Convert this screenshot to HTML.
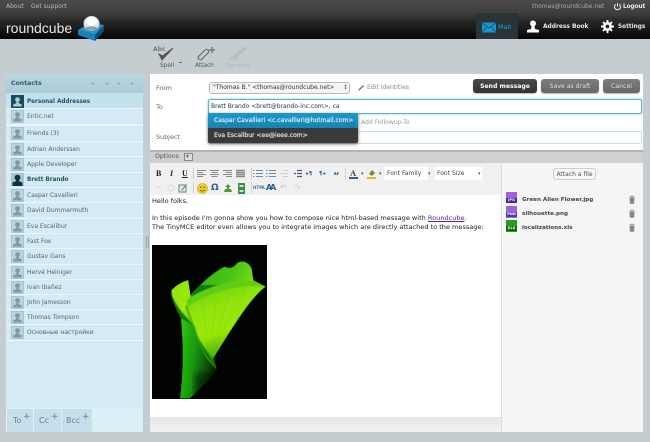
<!DOCTYPE html>
<html><head><meta charset="utf-8">
<style>
html,body{margin:0;padding:0}
body{width:650px;height:442px;overflow:hidden;position:relative;background:#c6cdd0;font-family:"DejaVu Sans","Liberation Sans","Noto Sans CJK SC",sans-serif;font-size:6.2px;color:#333}
div,span,svg{position:absolute;white-space:nowrap;box-sizing:border-box}
.t{line-height:10px;height:10px}
.c{left:27px;color:#4a6a77;font-size:6px;line-height:10px}
.cb{color:#2d5263;font-weight:bold;font-size:5.7px}
.l{position:absolute;left:6px;width:137px;height:1px;background:#e9f5fa}
.ic{left:11px;width:13px;height:13px}
.btn{height:14px;border-radius:3px;color:#ddd;text-align:center;line-height:15px;font-size:6.2px;background:linear-gradient(#7d7d7d,#686868);box-shadow:0 1px 1px #bbb}
.lab{color:#666;font-size:6.4px;left:156px;line-height:10px}
.fn{left:522px;font-size:5.6px;font-weight:bold;color:#444;line-height:10px}
.tb{color:#555;font-size:7px;line-height:10px}
.sep{width:1px;height:11px;background:#cfcfcf}
.ft{left:506px;width:11px;height:5px;font-size:3.6px;line-height:5px;color:#fff;font-weight:bold;text-align:center}
</style></head><body>
<svg width="0" height="0" style="left:0;top:0"><defs>
<symbol id="p" viewBox="0 0 13 13"><rect width="13" height="13" fill="#a9c4cf"/><rect x="1" y="1" width="11" height="11" fill="#bcd3dc"/><circle cx="6.500" cy="4.600" r="2.400" fill="#7d99a5"/><path d="M5.500 6.500h2l.3 1.600 3 1.400v2h-8.600v-2l3-1.400z" fill="#7d99a5"/></symbol>
<symbol id="d" viewBox="0 0 13 13"><rect width="13" height="13" fill="#1b4a5e"/><circle cx="6.500" cy="4.600" r="2.400" fill="#a9cad6"/><path d="M5.500 6.500h2l.3 1.600 3 1.400v2h-8.600v-2l3-1.400z" fill="#a9cad6"/></symbol>
<symbol id="b" viewBox="0 0 13 13"><rect width="13" height="13" fill="#a9c4cf"/><circle cx="6.500" cy="4.600" r="2.900" fill="#0d3344"/><path d="M5.200 6.500h2.600l.3 1.600 3.400 1.400v3.500H1.500V9.500l3.400-1.400z" fill="#0d3344"/></symbol>
<symbol id="tr" viewBox="0 0 8 9"><path d="M1 2h6M3 2V1h2v1M1.800 3h4.400l-.4 5.500H2.200z" fill="#888" stroke="#888" stroke-width=".6"/></symbol>
<filter id="b2"><feGaussianBlur stdDeviation="1.500"/></filter>
<filter id="b3"><feGaussianBlur stdDeviation="2.200"/></filter>
<filter id="b4"><feGaussianBlur stdDeviation="12"/></filter>
<linearGradient id="fr" x1=".2" y1="0" x2=".55" y2="1"><stop offset="0" stop-color="#66cc12"/><stop offset=".35" stop-color="#93e40a"/><stop offset=".65" stop-color="#9ae806"/><stop offset="1" stop-color="#2a9a0a"/></linearGradient>
<linearGradient id="lw" x1="0" y1="0" x2="1" y2=".3"><stop offset="0" stop-color="#35d016"/><stop offset=".5" stop-color="#17980c"/><stop offset="1" stop-color="#032a03"/></linearGradient>
<linearGradient id="bk" x1="0" y1="0" x2="1" y2=".3"><stop offset="0" stop-color="#2fa812"/><stop offset=".7" stop-color="#4cc414"/><stop offset="1" stop-color="#72da18"/></linearGradient>
<linearGradient id="lb" x1="0" y1="0" x2="1" y2="1"><stop offset="0" stop-color="#8ede14"/><stop offset=".6" stop-color="#a0e80a"/><stop offset="1" stop-color="#46ae0c"/></linearGradient>
</defs></svg>

<!-- header -->
<div style="left:0;top:0;width:650px;height:39px;background:linear-gradient(#4c4c4c 0,#3d3d3d 14px,#2a2a2a 20px,#060606 39px)"></div>
<div class="t" style="left:6px;top:2px;color:#bbb;font-size:6px">About</div>
<div class="t" style="left:31px;top:2px;color:#bbb;font-size:6px">Get support</div>
<div class="t" style="left:532px;top:2px;color:#aaa;font-size:6px">thomas@roundcube.net</div>
<div class="t" style="left:623px;top:2px;color:#eee;font-size:5.700px;font-weight:bold">Logout</div>
<svg style="left:613px;top:2px" width="9" height="9" viewBox="0 0 9 9"><path d="M2.800 2.300a3 3 0 1 0 3.400 0M4.500 1v3.500" fill="none" stroke="#eee" stroke-width="1"/></svg>
<div style="left:6px;top:18px;font-family:'Liberation Sans',sans-serif;font-size:14px;line-height:20px;color:#e6e6e6">roundcube</div>
<svg style="left:76px;top:14px" width="30" height="28" viewBox="0 0 30 28">
<path d="M2 16L14 9L28 11L19 21Z" fill="#2a90cc"/>
<path d="M2 16L19 21V27L2 21Z" fill="#1a80bd"/>
<path d="M19 21L28 11V17L19 27Z" fill="#0e4d7c"/>
<ellipse cx="15.500" cy="9.500" rx="8" ry="7.500" fill="#dfe2e2"/><ellipse cx="15.500" cy="7.500" rx="5.500" ry="4.500" fill="#fff"/>
<ellipse cx="15.500" cy="14.500" rx="6.500" ry="2" fill="#8e9ea6"/>
</svg>
<!-- tabs -->
<div style="left:476px;top:13px;width:42px;height:26px;background:#2a3438"></div>
<svg style="left:482px;top:22px" width="14" height="11" viewBox="0 0 14 11"><rect width="14" height="10" y=".5" rx="1" fill="#1b95cf"/><path d="M0 1l7 5 7-5M0 10l5-5M14 10l-5-5" fill="none" stroke="#0b4f70" stroke-width=".8"/></svg>
<div class="t" style="left:498px;top:22px;color:#1ea3dc;font-size:6.400px;line-height:11px">Mail</div>
<svg style="left:526px;top:20px" width="14" height="13" viewBox="0 0 14 13"><circle cx="7" cy="3.500" r="3" fill="#fff"/><path d="M5.500 6h3l.5 3 4 1v2.500H1V10l4-1z" fill="#fff"/></svg>
<div class="t" style="left:543px;top:22px;color:#e8e8e8;font-size:5.900px;font-weight:bold;line-height:11px">Address Book</div>
<svg style="left:601px;top:20px" width="13" height="13" viewBox="0 0 13 13"><circle cx="6.500" cy="6.500" r="3.200" fill="none" stroke="#fff" stroke-width="2.600"/><path d="M6.500 0v13M0 6.500h13M2 2l9 9M11 2l-9 9" stroke="#fff" stroke-width="1.900"/><circle cx="6.500" cy="6.500" r="1.900" fill="#222"/></svg>
<div class="t" style="left:618px;top:22px;color:#e8e8e8;font-size:5.800px;font-weight:bold;line-height:11px">Settings</div>

<!-- top toolbar -->
<div class="t" style="left:153px;top:45px;color:#777;font-size:6px;font-weight:bold">Abc</div>
<svg style="left:156px;top:46px" width="20" height="16" viewBox="0 0 20 16"><path d="M3 8l3 6L17 2 6.500 10z" fill="#555" stroke="#555" stroke-width="1"/></svg>
<div class="t" style="left:160px;top:61px;color:#555;font-size:5.800px">Spell</div>
<div style="left:179px;top:62px;width:3px;height:1px;background:#666"></div>
<svg style="left:195px;top:46px" width="24" height="16" viewBox="0 0 24 16"><path d="M3 11l7-7a2 2 0 0 1 3 3l-7 7a3 3 0 0 1-3-3l6-6" fill="none" stroke="#666" stroke-width="1.100"/><path d="M14 4h6M17 1v6" stroke="#777" stroke-width="1.500"/></svg>
<div class="t" style="left:195px;top:61px;color:#555;font-size:5.800px">Attach</div>
<svg style="left:227px;top:45px" width="24" height="17" viewBox="0 0 24 17"><path d="M3 14L18 2l2 1L8 14zM1 15h12" fill="#b9c0c2" stroke="#b5bcbe" stroke-width=".6"/></svg>
<div class="t" style="left:226px;top:61px;color:#aeb5b8;font-size:5.200px">Signature</div>

<!-- contacts panel -->
<div style="left:6px;top:74px;width:137px;height:358px;background:#d4eaf4;border-radius:2px 2px 0 0"></div>
<div style="left:6px;top:74px;width:137px;height:19px;background:linear-gradient(#bbd7e2,#a9cbd8);border-radius:2px 2px 0 0"></div>
<div class="t" style="left:11px;top:79px;color:#33596b;font-size:6.200px;font-weight:bold">Contacts</div>
<div class="t" style="left:91px;top:79px;color:#8caab6;font-size:6px;font-weight:bold">&#x25C2;</div>
<div class="t" style="left:105px;top:79px;color:#8caab6;font-size:6px;font-weight:bold">&#x25C2;</div>
<div class="t" style="left:118px;top:79px;color:#8caab6;font-size:6px;font-weight:bold">&#x25B8;</div>
<div class="t" style="left:131px;top:79px;color:#8caab6;font-size:6px;font-weight:bold">&#x25B8;</div>
<div style="left:6px;top:93px;width:137px;height:16px;background:#c4e2ee"></div>
<svg class="ic" style="top:95px"><use href="#d"/></svg>
<div class="c cb" style="top:97px">Personal Addresses</div>
<div class="l" style="top:108px"></div>
<svg class="ic" style="top:110px"><use href="#p"/></svg><div class="c" style="top:112px">Entic.net</div>
<div class="l" style="top:124px;height:2px"></div>

<svg class="ic" style="top:127px"><use href="#p"/></svg><div class="c" style="top:129px">Friends (3)</div><div class="l" style="top:141px"></div>
<svg class="ic" style="top:143px"><use href="#p"/></svg><div class="c" style="top:145px">Adrian Anderssen</div><div class="l" style="top:156px"></div>
<svg class="ic" style="top:158px"><use href="#p"/></svg><div class="c" style="top:160px">Apple Developer</div><div class="l" style="top:172px"></div>
<svg class="ic" style="top:173px"><use href="#b"/></svg><div class="c cb" style="top:175px">Brett Brando</div><div class="l" style="top:187px"></div>
<svg class="ic" style="top:189px"><use href="#p"/></svg><div class="c" style="top:191px">Caspar Cavallieri</div><div class="l" style="top:202px"></div>
<svg class="ic" style="top:204px"><use href="#p"/></svg><div class="c" style="top:206px">David Dummermuth</div><div class="l" style="top:218px"></div>
<svg class="ic" style="top:220px"><use href="#p"/></svg><div class="c" style="top:222px">Eva Escalibur</div><div class="l" style="top:233px"></div>
<svg class="ic" style="top:235px"><use href="#p"/></svg><div class="c" style="top:237px">Fast Fox</div><div class="l" style="top:248px"></div>
<svg class="ic" style="top:250px"><use href="#p"/></svg><div class="c" style="top:252px">Gustav Gans</div><div class="l" style="top:264px"></div>
<svg class="ic" style="top:266px"><use href="#p"/></svg><div class="c" style="top:268px">Hervé Heiniger</div><div class="l" style="top:279px"></div>
<svg class="ic" style="top:281px"><use href="#p"/></svg><div class="c" style="top:283px">Ivan Ibañez</div><div class="l" style="top:294px"></div>
<svg class="ic" style="top:296px"><use href="#p"/></svg><div class="c" style="top:298px">John Jamesson</div><div class="l" style="top:309px"></div>
<svg class="ic" style="top:311px"><use href="#p"/></svg><div class="c" style="top:313px">Thomas Tompson</div><div class="l" style="top:324px"></div>
<svg class="ic" style="top:326px"><use href="#p"/></svg><div class="c" style="top:328px">Основные настройки</div><div class="l" style="top:340px"></div>

<div style="left:6px;top:408px;width:137px;height:24px;background:#dcf0f8"></div>
<div style="left:7px;top:409px;width:26px;height:23px;background:#c5e0ec"></div>
<div style="left:34px;top:409px;width:27px;height:23px;background:#c5e0ec"></div>
<div style="left:62px;top:409px;width:30px;height:23px;background:#c5e0ec"></div>
<div class="t" style="left:13px;top:416px;color:#65828e;font-size:8px">To</div><div class="t" style="left:23px;top:412px;color:#65828e;font-size:9px">+</div>
<div class="t" style="left:39px;top:416px;color:#65828e;font-size:8px">Cc</div><div class="t" style="left:51px;top:412px;color:#65828e;font-size:9px">+</div>
<div class="t" style="left:66px;top:416px;color:#65828e;font-size:8px">Bcc</div><div class="t" style="left:82px;top:412px;color:#65828e;font-size:9px">+</div>

<!-- splitter grip -->
<div style="left:146px;top:236px;width:1px;height:12px;background:#9fa6a9"></div>
<div style="left:148px;top:236px;width:1px;height:12px;background:#9fa6a9"></div>

<!-- compose panel -->
<div style="left:150px;top:74px;width:493px;height:358px;background:#fff"></div>
<div class="lab" style="top:83px">From</div>
<div class="lab" style="top:102px">To</div>
<div class="lab" style="top:132px">Subject</div>
<div style="left:209px;top:82px;width:141px;height:12px;background:#f4f4f4;border:1px solid #bbb;border-radius:3px;font-size:6px;line-height:10px;padding-left:3px;color:#333">"Thomas B." &lt;thomas@roundcube.net&gt;</div>
<div class="t" style="left:343px;top:83px;color:#555;font-size:6px">&#x2195;</div>
<svg style="left:357px;top:84px" width="8" height="8" viewBox="0 0 8 8"><path d="M1 7l1-2 4-4 1 1-4 4z" fill="#777"/></svg>
<div class="t" style="left:367px;top:83px;color:#888;font-size:6.100px">Edit identities</div>
<div class="btn" style="left:473px;top:79px;width:64px;background:linear-gradient(#4a4a4a,#333);color:#fff;font-weight:bold;font-size:6.100px">Send message</div>
<div class="btn" style="left:541px;top:79px;width:58px">Save as draft</div>
<div class="btn" style="left:603px;top:79px;width:37px">Cancel</div>

<div style="left:208px;top:99px;width:434px;height:15px;background:#fff;border:1px solid #5fb1c8;box-shadow:0 0 2px #7cc4d8;border-radius:2px;font-size:6px;line-height:14px;padding-left:2px;color:#333">Brett Brando &lt;brett@brando-inc.com&gt;, ca</div>
<div class="t" style="left:361px;top:117px;color:#999;font-size:6.100px;line-height:11px">Add Followup-To</div>
<div style="left:208px;top:131px;width:434px;height:13px;background:#fff;border:1px solid #cdd;border-radius:2px"></div>
<div style="left:208px;top:113px;width:150px;height:30px;background:#3a3a3a;box-shadow:0 1px 3px rgba(0,0,0,.6);border-radius:0 0 2px 2px"></div>
<div style="left:208px;top:113px;width:150px;height:15px;background:linear-gradient(#1d97cb,#1683b3);font-size:6.050px;line-height:15px;padding-left:6px;color:#e6f6ff;-webkit-text-stroke:.15px #e6f6ff">Caspar Cavallieri &lt;c.cavallieri@hotmail.com&gt;</div>
<div style="left:208px;top:128px;width:150px;height:15px;font-size:6.050px;line-height:15px;padding-left:6px;color:#eee;-webkit-text-stroke:.15px #eee">Eva Escalibur &lt;ee@ieee.com&gt;</div>

<div style="left:150px;top:150px;width:493px;height:2px;background:#b3b3b3"></div>
<div style="left:150px;top:152px;width:493px;height:11px;background:#d0d0d0"></div>
<div class="t" style="left:155px;top:152px;color:#555;font-size:6.200px">Options</div>
<div style="left:184px;top:153px;width:9px;height:8px;border:1px solid #888;background:#ddd"></div>
<div class="t" style="left:186px;top:152px;color:#666;font-size:6px">&#x25BE;</div>

<!-- attachments pane -->
<div style="left:501px;top:163px;width:142px;height:269px;background:#f5f5f5;border-left:1px solid #ddd"></div>
<div style="left:553px;top:168px;width:43px;height:12px;background:#f7f7f7;border:1px solid #ccc;border-radius:3px;font-size:6px;line-height:11px;text-align:center;color:#555">Attach a file</div>
<div style="left:506px;top:192px;width:11px;height:11px;background:#a45fe0"></div><div class="ft" style="top:198px;background:#3a2f9a">JPG</div>
<div style="left:506px;top:206px;width:11px;height:12px;background:#a45fe0"></div><div class="ft" style="top:212px;background:#4a3fb0">PNG</div>
<div style="left:506px;top:220px;width:11px;height:12px;background:#2a9a1a"></div><div class="ft" style="top:226px;background:#146d10">XLS</div>
<div class="fn" style="top:195px">Green Alien Flower.jpg</div>
<div class="fn" style="top:209px">silhouette.png</div>
<div class="fn" style="top:223px">localizations.xls</div>
<svg style="left:628px;top:195px" width="8" height="9"><use href="#tr"/></svg>
<svg style="left:628px;top:209px" width="8" height="9"><use href="#tr"/></svg>
<svg style="left:628px;top:223px" width="8" height="9"><use href="#tr"/></svg>

<!-- editor toolbar -->
<div style="left:150px;top:163px;width:351px;height:32px;background:#f0f0f0"></div>
<div class="tb" style="left:156px;top:169px;font-family:'Liberation Serif',serif;font-weight:bold;color:#222;font-size:8px">B</div>
<div class="tb" style="left:170px;top:169px;font-family:'Liberation Serif',serif;font-style:italic;font-weight:bold;color:#222;font-size:8px">I</div>
<div class="tb" style="left:182px;top:169px;font-family:'Liberation Serif',serif;font-weight:bold;color:#222;font-size:8px;text-decoration:underline">U</div>
<div class="sep" style="left:193px;top:168px"></div>
<svg style="left:197px;top:169px" width="110" height="10" viewBox="0 0 110 10"><g fill="none" stroke="#888" stroke-width="1"><path d="M0 1.500h9M0 3.500h6M0 5.500h9M0 7.500h6" /><path d="M13 1.500h9M14.500 3.500h6M13 5.500h9M14.500 7.500h6"/><path d="M26 1.500h9M29 3.500h6M26 5.500h9M29 7.500h6"/><path d="M39 1.500h9M39 3.500h9M39 5.500h9M39 7.500h9" stroke-width="1.500"/></g><g fill="none" stroke="#6b8bab" stroke-width="1"><path d="M59 1.500h7M59 4.500h7M59 7.500h7M56 1.500h1.500M56 4.500h1.500M56 7.500h1.500"/><path d="M72 1.500h7M72 4.500h7M72 7.500h7M69 1.500h1.500M69 4.500h1.500M69 7.500h1.500"/><path d="M86 1.500h5M86 4.500h5M86 7.500h5M83 4.500h2" stroke="#c6d0da"/><path d="M100 1.500h5M100 4.500h5M100 7.500h5M97 4.500h2" stroke="#3d5a78" stroke-width="1.300"/></g></svg>
<div class="sep" style="left:251px;top:168px"></div>
<div class="tb" style="left:306px;top:169px;color:#345f85;font-size:5.500px;font-weight:bold">&#x25B8;&#xB6;</div>
<div class="tb" style="left:319px;top:169px;color:#345f85;font-size:5.500px;font-weight:bold">&#xB6;&#x25C2;</div>
<div class="tb" style="left:333px;top:170px;color:#3a6f96;font-size:10px;font-weight:bold;line-height:14px">&#x201C;</div>
<div class="sep" style="left:345px;top:168px"></div>
<div class="tb" style="left:350px;top:168px;color:#345;font-size:8.500px;font-weight:bold;font-family:'Liberation Serif',serif">A</div>
<div style="left:349px;top:177px;width:9px;height:2px;background:#3a5a9a"></div>
<div class="tb" style="left:361px;top:169px;font-size:5px">&#x25BE;</div>
<svg style="left:367px;top:169px" width="10" height="10" viewBox="0 0 10 10"><path d="M2 5l3-4 3 3-3 3z" fill="#7a8a2a"/><rect x="0" y="8" width="9" height="2" fill="#d8c020"/></svg>
<div class="tb" style="left:379px;top:169px;font-size:5px">&#x25BE;</div>
<div style="left:384px;top:167px;width:44px;height:13px;background:#fff;font-size:6px;line-height:13px;padding-left:3px;color:#444">Font Family</div>
<div class="tb" style="left:428px;top:169px;font-size:5px">&#x25BE;</div>
<div style="left:435px;top:167px;width:47px;height:13px;background:#fff;font-size:6px;line-height:13px;padding-left:2px;color:#444">Font Size</div>
<div class="tb" style="left:478px;top:169px;font-size:5px">&#x25BE;</div>

<div class="tb" style="left:155px;top:183px;color:#ccc;font-size:6px;font-weight:bold">&#x2013;&#x2013;</div>
<svg style="left:167px;top:184px" width="8" height="8"><circle cx="4" cy="4" r="3" fill="none" stroke="#d8d8d8"/></svg>
<svg style="left:178px;top:183px" width="10" height="10" viewBox="0 0 10 10"><rect x="1" y="2" width="7" height="7" fill="#eef" stroke="#5a7a9a"/><path d="M3 7l5-6 1 1-5 6z" fill="#8a9a3a"/></svg>
<div class="sep" style="left:193px;top:182px"></div>
<svg style="left:197px;top:183px" width="11" height="11" viewBox="0 0 11 11"><circle cx="5.500" cy="5.500" r="5" fill="#f0d020" stroke="#c0a010" stroke-width=".6"/><circle cx="3.800" cy="4.300" r=".7" fill="#443"/><circle cx="7.200" cy="4.300" r=".7" fill="#443"/><path d="M3 6.800a3 3 0 0 0 5 0" fill="none" stroke="#443" stroke-width=".7"/></svg>
<div class="tb" style="left:211px;top:183px;color:#2a5f95;font-size:9px;font-weight:bold;line-height:11px">&#x3A9;</div>
<svg style="left:223px;top:183px" width="10" height="10" viewBox="0 0 10 10"><path d="M5 1l3 3H6v2h2l1 3H1l1-3h2V4H2z" fill="#4f9a2f"/></svg>
<svg style="left:237px;top:183px" width="9" height="11" viewBox="0 0 9 11"><rect x="1" y="0" width="7" height="11" fill="#3f8a4a"/><rect x="2.500" y="2" width="4" height="2" fill="#c5e5c5"/><rect x="2.500" y="7" width="4" height="2" fill="#c5e5c5"/></svg>
<div class="sep" style="left:251px;top:182px"></div>
<div class="tb" style="left:253px;top:183px;color:#4a6f95;font-size:4px;font-weight:bold">HTML</div>
<div class="tb" style="left:266px;top:183px;color:#2f5f95;font-size:8px;font-weight:bold">A</div><div class="tb" style="left:270px;top:183px;color:#2f5f95;font-size:8px;font-weight:bold">A</div>
<div class="tb" style="left:280px;top:183px;color:#b8c6d2;font-size:8px">&#x21B6;</div>
<div class="tb" style="left:294px;top:183px;color:#c8d2da;font-size:8px">&#x21B7;</div>

<!-- editor body -->
<div class="t" style="left:152px;top:196px;color:#222;font-size:6.550px">Hello folks,</div>
<div class="t" style="left:152px;top:213px;color:#222;font-size:6.550px">In this episode I'm gonna show you how to compose nice html-based message with <span style="position:static;color:#5a2a90;text-decoration:underline">Roundcube</span>.</div>
<div class="t" style="left:152px;top:222px;color:#222;font-size:6.550px">The TinyMCE editor even allows you to integrate images which are directly attached to the message:</div>

<!-- flower -->
<div style="left:152px;top:245px;width:115px;height:154px;background:#010301;overflow:hidden"></div>
<svg style="left:152px;top:245px;overflow:hidden" width="115" height="154" viewBox="21 15 345 462">
<defs><clipPath id="fc"><path d="M105 475C115 400 116 320 108 235C90 200 75 170 80 150C95 135 110 125 130 120L136 165C170 130 210 90 240 80C255 88 268 80 275 70C290 58 310 65 320 85L325 120L362 140C320 170 270 250 205 355L215 385L190 420L135 475Z"/></clipPath></defs>
<g clip-path="url(#fc)">
<rect x="60" y="50" width="320" height="440" fill="#0f7a08"/>
<path d="M120 180C170 125 225 85 240 80C255 88 268 80 275 70C290 58 310 65 320 85L330 135H120Z" fill="url(#bk)" filter="url(#b2)"/>
<path d="M120 185C170 150 250 118 330 126L365 140C320 170 270 250 205 360C175 320 150 285 145 255Z" fill="url(#fr)" filter="url(#b3)"/>
<g fill="none" stroke="#4aa80c" stroke-width="2" opacity=".2" filter="url(#b2)"><path d="M190 345L175 190M193 340L215 170M197 335L255 155M200 330L300 150"/></g>
<path d="M75 150C95 135 110 125 130 120L138 175L122 200L148 258C110 220 85 185 75 150Z" fill="url(#lb)" filter="url(#b2)"/>
<path d="M125 180C170 148 250 116 330 124L362 140C310 130 220 146 150 185L128 200Z" fill="#5fcc12" filter="url(#b2)"/>
<path d="M100 230L148 258C160 310 175 350 218 385L190 425L135 480H100Z" fill="url(#lw)" filter="url(#b2)"/>
<path d="M148 258C160 310 175 350 215 385" fill="none" stroke="#3fae18" stroke-width="2.500" filter="url(#b2)"/>
<rect x="150" y="400" width="90" height="90" fill="#010301" opacity=".5" filter="url(#b4)"/>
</g>
</svg>

<!-- bottom strip -->
<div style="left:150px;top:417px;width:351px;height:15px;background:linear-gradient(#e4e4e4,#f2f2f2)"></div>
</body></html>
